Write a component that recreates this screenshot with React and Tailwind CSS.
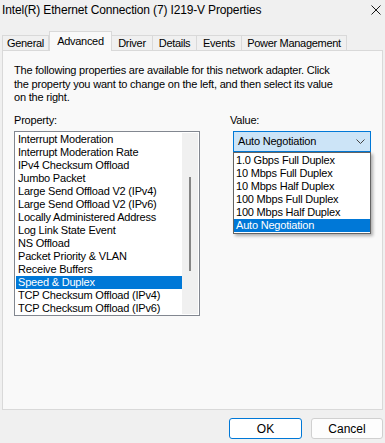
import React from "react";

const props = [
  "Interrupt Moderation",
  "Interrupt Moderation Rate",
  "IPv4 Checksum Offload",
  "Jumbo Packet",
  "Large Send Offload V2 (IPv4)",
  "Large Send Offload V2 (IPv6)",
  "Locally Administered Address",
  "Log Link State Event",
  "NS Offload",
  "Packet Priority & VLAN",
  "Receive Buffers",
  "Speed & Duplex",
  "TCP Checksum Offload (IPv4)",
  "TCP Checksum Offload (IPv6)",
];

const values = [
  "1.0 Gbps Full Duplex",
  "10 Mbps Full Duplex",
  "10 Mbps Half Duplex",
  "100 Mbps Full Duplex",
  "100 Mbps Half Duplex",
  "Auto Negotiation",
];

const tabs = [
  { label: "General", w: "w-[47px]" },
  { label: "Advanced", w: "w-[63px]", active: true },
  { label: "Driver", w: "w-[41px]" },
  { label: "Details", w: "w-[44px]" },
  { label: "Events", w: "w-[45px]" },
  { label: "Power Management", w: "w-[105px]" },
];

export default function App() {
  return (
    <div className="w-[385px] h-[443px] bg-[#f0f0f0] flex flex-col overflow-hidden text-black font-['Liberation_Sans',Arial,sans-serif]">
      {/* Title bar */}
      <div className="h-[19px] flex items-center justify-between pl-[2px] pr-[4px] pt-[1px]">
        <span className="text-[12px] leading-[14px] tracking-[-0.15px]">
          Intel(R) Ethernet Connection (7) I219-V Properties
        </span>
        <svg width="10" height="10" viewBox="0 0 10 10" className="mt-[-1px]">
          <path d="M0.5 0.5 L9.5 9.5 M9.5 0.5 L0.5 9.5" stroke="#1a1a1a" strokeWidth="1" fill="none" />
        </svg>
      </div>
      <div className="h-[12px]" />
      {/* Tabs */}
      <div className="h-[19px] flex items-end pl-[2px] text-[11px] tracking-[-0.3px]">
        {tabs.map((t) =>
          t.active ? (
            <div
              key={t.label}
              className={`${t.w} h-[20px] -mb-px relative z-10 bg-[#f9f9f9] border-x border-t border-[#d9d9d9] flex items-start justify-center pt-[3px] leading-[13px]`}
            >
              {t.label}
            </div>
          ) : (
            <div
              key={t.label}
              className={`${t.w} h-[15px] bg-[#f0f0f0] border-t border-r border-[#d9d9d9] first:border-l flex items-center justify-center leading-[13px]`}
            >
              {t.label}
            </div>
          )
        )}
      </div>
      {/* Panel */}
      <div className="ml-[2px] w-[381px] h-[360px] border border-[#d9d9d9] bg-[#f9f9f9] pt-[13px] pl-[11px] text-[11px] tracking-[-0.2px]">
        <p className="leading-[13.5px]">
          The following properties are available for this network adapter. Click
          <br />
          the property you want to change on the left, and then select its value
          <br />
          on the right.
        </p>
        <div className="mt-[9px] flex">
          {/* Property */}
          <div className="w-[186px] flex flex-col">
            <div className="leading-[13px] h-[13px]">Property:</div>
            <div className="mt-[4px] h-[185px] border border-[#828790] bg-white p-px flex">
              <div className="flex-1 flex flex-col">
                {props.map((p) => (
                  <div
                    key={p}
                    className={`h-[13px] leading-[13px] pl-[2px] whitespace-nowrap ${
                      p === "Speed & Duplex" ? "bg-[#0078d7] text-white" : ""
                    }`}
                  >
                    {p}
                  </div>
                ))}
              </div>
              <div className="w-[16px] bg-[#f0f0f0] flex flex-col items-center pt-[44px]">
                <div className="w-[2px] h-[94px] bg-[#858585]" />
              </div>
            </div>
          </div>
          {/* Value */}
          <div className="ml-[30px] flex flex-col">
            <div className="leading-[13px] h-[13px]">Value:</div>
            <div className="mt-[4px] ml-[3px] w-[138px] h-[21px] border border-[#0078d7] bg-[#cce4f7] relative flex items-center justify-between pl-[4px] pr-[5px]">
              <span className="leading-[13px]">Auto Negotiation</span>
              <svg width="9" height="5" viewBox="0 0 9 5">
                <path d="M0.5 0.5 L4.5 4.5 L8.5 0.5" stroke="#444" strokeWidth="1" fill="none" />
              </svg>
              <div className="absolute left-[-1px] top-[20px] w-[138px] border border-[#646464] bg-white pt-px pb-px shadow-[2px_2px_3px_rgba(0,0,0,0.3)] z-20">
                {values.map((v) => (
                  <div
                    key={v}
                    className={`h-[13px] leading-[13px] pl-[2px] whitespace-nowrap ${
                      v === "Auto Negotiation" ? "bg-[#0078d7] text-white" : ""
                    }`}
                  >
                    {v}
                  </div>
                ))}
              </div>
            </div>
          </div>
        </div>
      </div>
      {/* Buttons */}
      <div className="mt-[8px] flex justify-end gap-[9px] pr-[2px] text-[12px]">
        <button className="w-[73px] h-[21px] border border-[#0078d7] rounded-[3px] bg-white flex items-center justify-center leading-[14px]">
          OK
        </button>
        <button className="w-[72px] h-[21px] border border-[#d0d0d0] rounded-[3px] bg-[#fdfdfd] flex items-center justify-center leading-[14px]">
          Cancel
        </button>
      </div>
    </div>
  );
}
